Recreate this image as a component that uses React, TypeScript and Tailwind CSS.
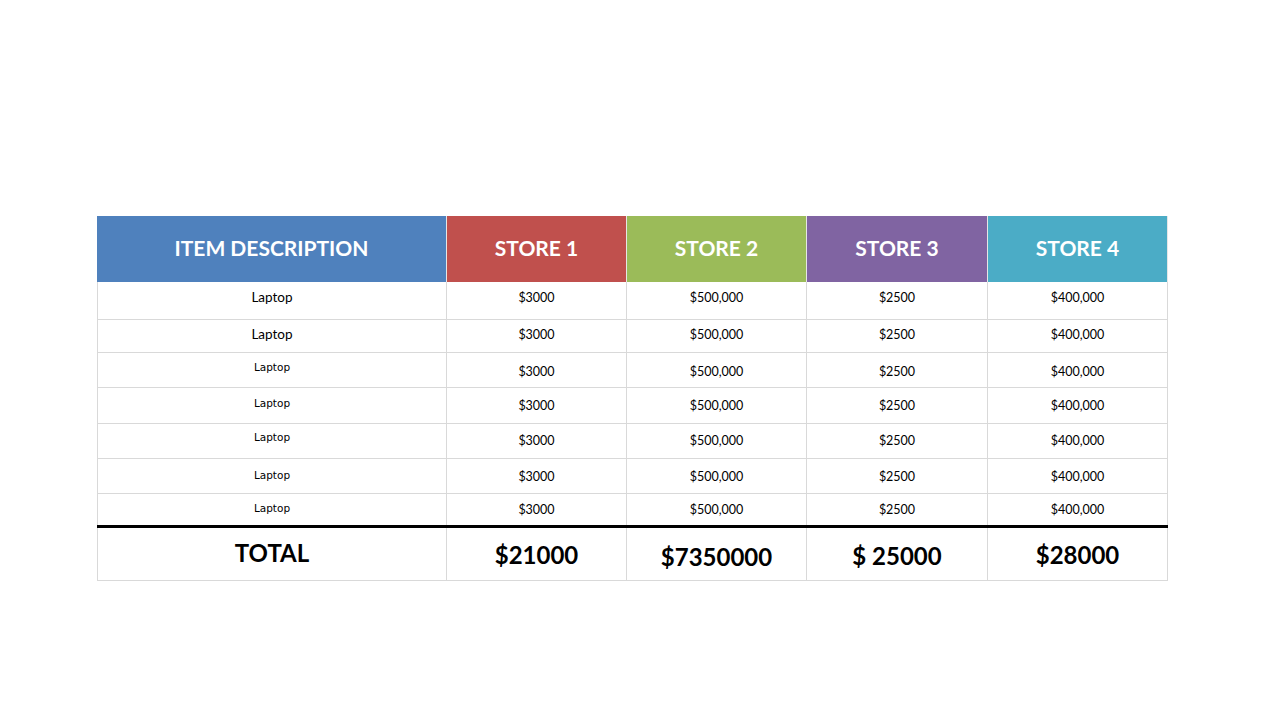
const headers = [
  { label: 'ITEM DESCRIPTION', bg: 'bg-[#4f81bd]', w: 'w-[350px]' },
  { label: 'STORE 1', bg: 'bg-[#c0504d]', w: 'w-[180px]' },
  { label: 'STORE 2', bg: 'bg-[#9bbb59]', w: 'w-[180px]' },
  { label: 'STORE 3', bg: 'bg-[#8064a2]', w: 'w-[181px]' },
  { label: 'STORE 4', bg: 'bg-[#4bacc6]', w: 'w-[180px]' },
]

const widths = ['w-[350px]', 'w-[180px]', 'w-[180px]', 'w-[181px]', 'w-[180px]']
const values = ['$3000', '$500,000', '$2500', '$400,000']

// h = row height incl. bottom line, lp / np = top padding for label / numbers
const rows = [
  { h: 38, big: true, lp: 7, np: 8, line: true },
  { h: 33, big: true, lp: 6, np: 7, line: true },
  { h: 35, big: false, lp: 6, np: 11, line: true },
  { h: 36, big: false, lp: 7, np: 10, line: true },
  { h: 35, big: false, lp: 5, np: 9, line: true },
  { h: 35, big: false, lp: 8, np: 10, line: true },
  { h: 31, big: false, lp: 6, np: 8, line: false },
]

const totals = [
  { text: 'TOTAL', pt: 11 },
  { text: '$21000', pt: 13 },
  { text: '$7350000', pt: 15 },
  { text: '$ 25000', pt: 14 },
  { text: '$28000', pt: 13 },
]

const calibri = "font-['Lato','Open_Sans',sans-serif]"

export default function App() {
  return (
    <div className="min-h-screen w-full bg-white pt-[216px] pl-[97px]">
      <div className="flex w-max flex-col">
        {/* Header */}
        <div className="flex h-[66px]">
          {headers.map((h) => (
            <div
              key={h.label}
              className={`${h.w} ${h.bg} flex items-center justify-center border-r border-[#e6e6e6] text-white font-bold text-[21px] ${calibri}`}
            >
              <span className="mt-[-2px]">{h.label}</span>
            </div>
          ))}
        </div>

        {/* Item rows */}
        {rows.map((r, i) => (
          <div
            key={i}
            className={`flex ${r.line ? 'border-b border-[#d9d9d9]' : ''}`}
            style={{ height: r.h }}
          >
            <div
              className={`${widths[0]} border-l border-r border-[#d9d9d9] flex justify-center text-black ${
                r.big
                  ? `text-[13.5px] leading-[16px] ${calibri}`
                  : "text-[10.5px] leading-[16px] font-['DejaVu_Sans',sans-serif]"
              }`}
              style={{ paddingTop: r.lp }}
            >
              Laptop
            </div>
            {values.map((v, j) => (
              <div
                key={j}
                className={`${widths[j + 1]} border-r border-[#d9d9d9] flex justify-center text-black text-[12.5px] leading-[16px] ${calibri}`}
                style={{ paddingTop: r.np }}
              >
                {v}
              </div>
            ))}
          </div>
        ))}

        {/* Total row */}
        <div className="flex h-[56px] border-t-[3px] border-t-black border-b border-b-[#d9d9d9]">
          {totals.map((t, j) => (
            <div
              key={t.text}
              className={`${widths[j]} ${j === 0 ? 'border-l' : ''} border-r border-[#d9d9d9] flex justify-center text-black font-bold text-[24px] leading-[28px] ${calibri}`}
              style={{ paddingTop: t.pt }}
            >
              {t.text}
            </div>
          ))}
        </div>
      </div>
    </div>
  )
}
